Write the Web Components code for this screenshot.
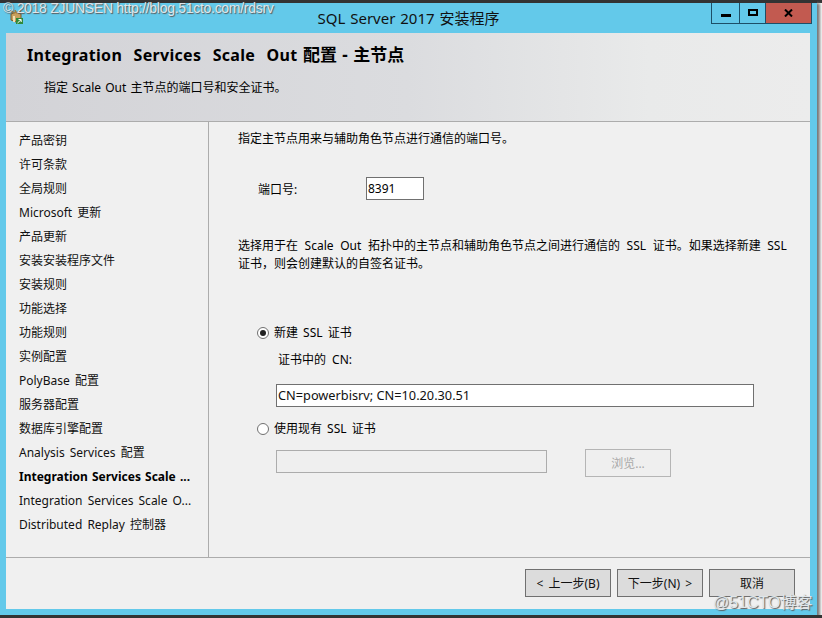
<!DOCTYPE html>
<html lang="zh">
<head>
<meta charset="utf-8">
<title>SQL Server 2017 安装程序</title>
<style>
html { background: linear-gradient(#333 3px, #fff 3px); }
html, body { margin: 0; padding: 0; }
body { font: 12px "Noto Sans", "Noto Sans CJK SC", sans-serif; color: #000; }
</style>
</head>
<body>
<template id="title-bar-tpl">
<style>
:host { display: flex; height: 33px; box-sizing: border-box; border-top: 3px solid #333; position: relative; }
.icon { position: absolute; left: 10px; top: 7px; }
.title { flex: 1; text-align: center; font-size: 15px; line-height: 30px; padding-left: 106px; color: #111; word-spacing: 1px; }
.btns { display: flex; height: 21px; margin-right: 5px; border: 1px solid #1d4f68; border-top: 0; box-sizing: border-box; width: 101px; }
.btns div { display: flex; align-items: center; justify-content: center; box-sizing: border-box; }
.min { width: 28px; border-right: 1px solid #1d4f68; }
.max { width: 26px; border-right: 1px solid #1d4f68; }
.close { flex: 1; background: #c25a50; }
</style>
<svg class="icon" width="14" height="14" viewBox="0 0 14 14">
  <path d="M1 4 L6 2 L11 4 L11 10 L6 12 L1 10 Z" fill="#c9a05c" stroke="#7a5a2a" stroke-width="1"/>
  <path d="M0 1 L5 3 M5 0 L6 3 M11 1 L6 3" stroke="#a37f41" stroke-width="1.500" fill="none"/>
  <rect x="3" y="6" width="2" height="6" fill="#f2e0b0"/>
  <rect x="6" y="8" width="7" height="6" fill="#2f8a3a"/>
  <path d="M7.500 13 L11 9.800 M8.500 9.500 H11.200 V12" stroke="#fff" stroke-width="1" fill="none"/>
</svg>
<div class="title"><slot></slot></div>
<div class="btns">
  <div class="min"><svg width="10" height="10" viewBox="0 0 10 10"><rect y="6" width="10" height="3" fill="#000"/></svg></div>
  <div class="max"><svg width="10" height="10" viewBox="0 0 10 10"><path d="M0 1H10V8H0Z M2 3V6H8V3Z" fill="#000" fill-rule="evenodd"/></svg></div>
  <div class="close"><svg width="9" height="8" viewBox="0 0 9 8"><path d="M1 0.500 L8 7.500 M8 0.500 L1 7.500" stroke="#000" stroke-width="2" fill="none"/></svg></div>
</div>
</template>

<template id="wizard-header-tpl">
<style>
:host { display: block; height: 89px; box-sizing: border-box; border-bottom: 1px solid #acacac;
  background: linear-gradient(90deg, #d3d3d7 0%, #dbdcdf 50%, #e9eaea 80%, #ececec 100%); padding: 10px 21px 0; }
h1 { margin: 0; font-size: 16px; font-weight: 700; line-height: 24px; height: 24px; letter-spacing: .3px; word-spacing: 7px; }
p { margin: 12px 0 0 17px; font-size: 12px; line-height: 18px; word-spacing: 1px; }
</style>
<h1><slot name="title"></slot></h1>
<p><slot name="sub"></slot></p>
</template>

<template id="step-nav-tpl">
<style>
:host { display: block; width: 203px; flex: none; box-sizing: border-box; border-right: 1px solid #acacac; padding: 7px 0 0 13px; }
</style>
<slot></slot>
</template>

<template id="step-item-tpl">
<style>
:host { display: block; height: 24px; line-height: 24px; white-space: nowrap; font-size: 12px; word-spacing: 2px; color: #111; }
:host([current]) { font-weight: 700; color: #000; word-spacing: 1px; }
</style>
<slot></slot>
</template>

<template id="radio-option-tpl">
<style>
:host { display: flex; align-items: center; gap: 5px; height: 18px; font-size: 12px; word-spacing: 2px; }
i { width: 12px; height: 12px; box-sizing: border-box; border: 1px solid #707070; border-radius: 50%; background: #fff; display: flex; align-items: center; justify-content: center; margin-top: 1px; }
:host([checked]) i::after { content: ""; width: 6px; height: 6px; border-radius: 50%; background: #222; }
</style>
<i></i><span><slot></slot></span>
</template>

<template id="text-box-tpl">
<style>
:host { display: block; box-sizing: border-box; height: 23px; line-height: 21px; border: 1px solid #707070; background: #fff; padding: 0 1px; font-size: 12px; color: #111; white-space: nowrap; }
:host([disabled]) { border-color: #acacac; background: #efefef; }
</style>
<slot></slot>
</template>

<template id="push-button-tpl">
<style>
:host { display: flex; align-items: center; justify-content: center; box-sizing: border-box; width: 86px; height: 28px; border: 1px solid #707070; background: #dcdcdc; font-size: 12px; color: #111; white-space: nowrap; word-spacing: 2px; }
:host([disabled]) { border-color: #b5b5b5; background: #efefef; color: #a8a8a8; }
</style>
<slot></slot>
</template>

<template id="config-pane-tpl">
<style>
:host { display: flex; flex-direction: column; flex: 1; box-sizing: border-box; padding: 8px 22px 0 29px; font-size: 12px; }
.line { line-height: 18px; word-spacing: 1px; }
.port { display: flex; align-items: center; margin: 29px 0 0 20px; height: 23px; }
.port span { width: 108px; }
.port text-box { width: 58px; color: #000; }
.wrap { margin-top: 37px; width: 552px; line-height: 18px; word-spacing: 3.500px; }
.new { margin: 50px 0 0 19px; }
.cn { margin: 10px 0 0 40px; line-height: 18px; word-spacing: 3px; }
.cnbox { margin: 15px 0 0 38px; width: 478px; font-size: 12.750px; }
.old { margin: 12px 0 0 19px; }
.row { display: flex; align-items: flex-start; margin: 13px 0 0 38px; }
.row text-box { width: 271px; }
.row push-button { margin: -1px 0 0 38px; }
</style>
<div class="line">指定主节点用来与辅助角色节点进行通信的端口号。</div>
<div class="port"><span>端口号:</span><text-box>8391</text-box></div>
<div class="wrap">选择用于在 Scale Out 拓扑中的主节点和辅助角色节点之间进行通信的 SSL 证书。如果选择新建 SSL 证书，则会创建默认的自签名证书。</div>
<radio-option class="new" checked>新建 SSL 证书</radio-option>
<div class="cn">证书中的 CN:</div>
<text-box class="cnbox">CN=powerbisrv; CN=10.20.30.51</text-box>
<radio-option class="old">使用现有 SSL 证书</radio-option>
<div class="row"><text-box disabled></text-box><push-button disabled>浏览...</push-button></div>
</template>

<template id="wizard-footer-tpl">
<style>
:host { display: flex; justify-content: flex-end; gap: 6px; height: 52px; box-sizing: border-box; border-top: 1px solid #acacac; padding: 11px 15px 0 0; }
</style>
<slot></slot>
</template>

<template id="setup-window-tpl">
<style>
:host { display: block; width: 817px; height: 615px; box-sizing: border-box; background: #63c9ea; box-shadow: 3px 3px 3px #777; position: relative; }
.client { margin: 0 6px; width: 804px; height: 576px; background: #f0f0f0; display: flex; flex-direction: column; }
.mid { display: flex; flex: 1; min-height: 0; }
</style>
<slot name="bar"></slot>
<div class="client">
  <slot name="head"></slot>
  <div class="mid"><slot name="nav"></slot><slot name="pane"></slot></div>
  <slot name="foot"></slot>
</div>
<slot name="marks"></slot>
</template>

<template id="water-mark-tpl">
<style>
:host { position: absolute; white-space: nowrap; color: #dfe6ea; font-family: "Liberation Sans", "Noto Sans CJK SC", sans-serif; text-shadow: 1px 1px 1px #5a5a5a; }
</style>
<slot></slot>
</template>

<setup-window>
  <title-bar slot="bar">SQL Server 2017 安装程序</title-bar>
  <wizard-header slot="head">
    <span slot="title">Integration Services Scale Out<span style="word-spacing:1px;letter-spacing:0;font-size:17px"> 配置 - 主节点</span></span>
    <span slot="sub">指定 Scale Out 主节点的端口号和安全证书。</span>
  </wizard-header>
  <step-nav slot="nav">
    <step-item>产品密钥</step-item>
    <step-item>许可条款</step-item>
    <step-item>全局规则</step-item>
    <step-item>Microsoft 更新</step-item>
    <step-item>产品更新</step-item>
    <step-item>安装安装程序文件</step-item>
    <step-item>安装规则</step-item>
    <step-item>功能选择</step-item>
    <step-item>功能规则</step-item>
    <step-item>实例配置</step-item>
    <step-item>PolyBase 配置</step-item>
    <step-item>服务器配置</step-item>
    <step-item>数据库引擎配置</step-item>
    <step-item>Analysis Services 配置</step-item>
    <step-item current>Integration Services Scale ...</step-item>
    <step-item>Integration Services Scale O...</step-item>
    <step-item>Distributed Replay 控制器</step-item>
  </step-nav>
  <config-pane slot="pane"></config-pane>
  <wizard-footer slot="foot">
    <push-button>&lt; 上一步(B)</push-button>
    <push-button>下一步(N) &gt;</push-button>
    <push-button>取消</push-button>
  </wizard-footer>
  <water-mark slot="marks" style="left:3px;top:0;font-size:14px;letter-spacing:-.29px">© 2018 ZJUNSEN http://blog.51cto.com/rdsrv</water-mark>
  <water-mark slot="marks" style="left:713px;top:589px;font-size:16px">@51CTO博客</water-mark>
</setup-window>

<script>
function define(name) {
  const tpl = document.getElementById(name + '-tpl');
  customElements.define(name, class extends HTMLElement {
    constructor() {
      super();
      this.attachShadow({ mode: 'open' });
      this.shadowRoot.appendChild(tpl.content.cloneNode(true));
    }
  });
}

['title-bar', 'wizard-header', 'step-nav', 'step-item', 'radio-option', 'text-box',
 'push-button', 'config-pane', 'wizard-footer', 'setup-window', 'water-mark'].forEach(define);
</script>
</body>
</html>
